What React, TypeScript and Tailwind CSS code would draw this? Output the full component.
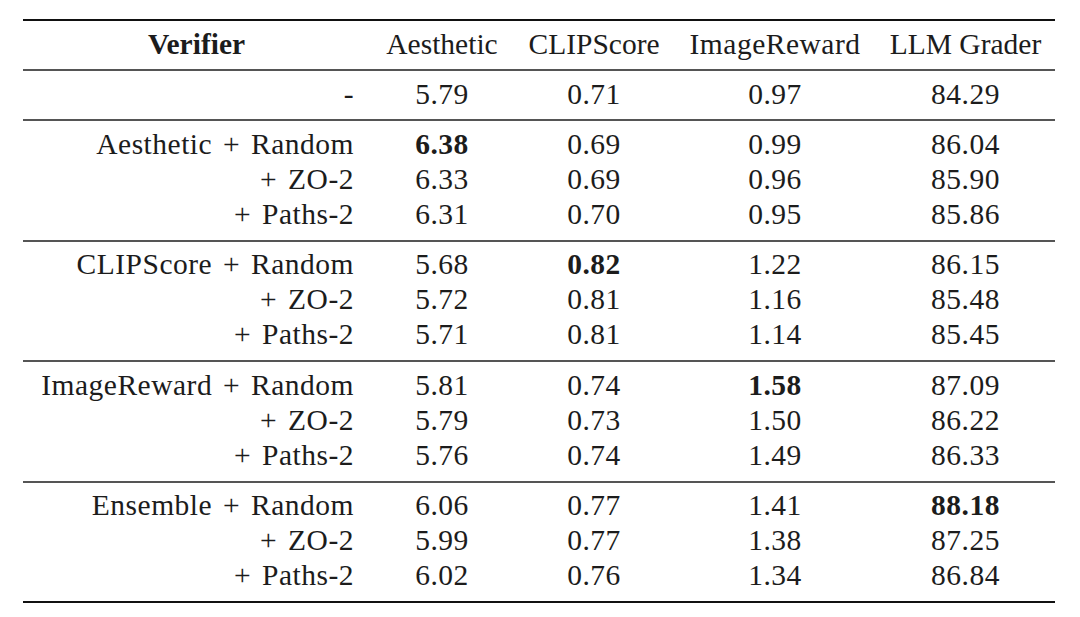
import React from "react";

type Row = { label: string; vals: string[]; bold?: number };

const groups: Row[][] = [
  [{ label: "-", vals: ["5.79", "0.71", "0.97", "84.29"] }],
  [
    { label: "Aesthetic + Random", vals: ["6.38", "0.69", "0.99", "86.04"], bold: 0 },
    { label: "+ ZO-2", vals: ["6.33", "0.69", "0.96", "85.90"] },
    { label: "+ Paths-2", vals: ["6.31", "0.70", "0.95", "85.86"] },
  ],
  [
    { label: "CLIPScore + Random", vals: ["5.68", "0.82", "1.22", "86.15"], bold: 1 },
    { label: "+ ZO-2", vals: ["5.72", "0.81", "1.16", "85.48"] },
    { label: "+ Paths-2", vals: ["5.71", "0.81", "1.14", "85.45"] },
  ],
  [
    { label: "ImageReward + Random", vals: ["5.81", "0.74", "1.58", "87.09"], bold: 2 },
    { label: "+ ZO-2", vals: ["5.79", "0.73", "1.50", "86.22"] },
    { label: "+ Paths-2", vals: ["5.76", "0.74", "1.49", "86.33"] },
  ],
  [
    { label: "Ensemble + Random", vals: ["6.06", "0.77", "1.41", "88.18"], bold: 3 },
    { label: "+ ZO-2", vals: ["5.99", "0.77", "1.38", "87.25"] },
    { label: "+ Paths-2", vals: ["6.02", "0.76", "1.34", "86.84"] },
  ],
];

const cols = "grid grid-cols-[347px_144px_160px_202px_179px]";

function DataRow({ r, h }: { r: Row; h: string }) {
  return (
    <div className={`${cols} ${h} items-center`}>
      <div className="text-right pr-[16px] tracking-[0.5px] [word-spacing:3px]">{r.label}</div>
      {r.vals.map((v, i) => (
        <div key={i} className={`text-center tracking-[0.5px] ${r.bold === i ? "font-bold" : ""}`}>
          {v}
        </div>
      ))}
    </div>
  );
}

export default function App() {
  return (
    <div
      className="w-[1080px] h-[617px] bg-white text-[#1c1c1c] text-[29.5px] leading-none pt-[19px] pl-[23px]"
      style={{ fontFamily: '"Liberation Serif", "Times New Roman", serif' }}
    >
      <div className="w-[1032px]">
        <div className="h-[2px] bg-[#111]" />
        <div className={`${cols} h-[48px] items-center`}>
          <div className="text-center font-bold">Verifier</div>
          <div className="text-center">Aesthetic</div>
          <div className="text-center">CLIPScore</div>
          <div className="text-center tracking-[0.5px]">ImageReward</div>
          <div className="text-center">LLM Grader</div>
        </div>
        {groups.map((g, gi) => (
          <div key={gi}>
            <div className="h-[2px] bg-[#555]" />
            {gi === 0 ? (
              <DataRow r={g[0]} h="h-[48px]" />
            ) : (
              <div className="pt-[6px] pb-[7.5px]">
                {g.map((r, ri) => (
                  <DataRow key={ri} r={r} h="h-[35px]" />
                ))}
              </div>
            )}
          </div>
        ))}
        <div className="h-[2px] bg-[#111]" />
      </div>
    </div>
  );
}
